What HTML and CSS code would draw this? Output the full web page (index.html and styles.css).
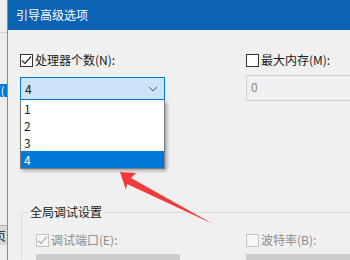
FILE: index.html
```html
<!DOCTYPE html>
<html lang="zh-CN">
<head>
  <meta charset="UTF-8">
  <title>引导高级选项</title>
  <link rel="stylesheet" href="styles.css">
</head>
<body>
  <div class="screen">
    <!-- window behind the dialog -->
    <div class="behind">
      <div class="behind-line"></div>
      <div class="behind-sel">((</div>
      <div class="behind-btn">页</div>
    </div>

    <div class="dialog">
      <div class="titlebar">引导高级选项</div>

      <div class="content">
        <div class="row top-row">
          <div class="col">
            <label class="check-label">
              <span class="checkbox checked">
                <svg width="11" height="11" viewBox="0 0 11 11"><path d="M1 5.5 L4 8.5 L10 1.5" fill="none" stroke="#333" stroke-width="1.2"/></svg>
              </span>处理器个数(N):
            </label>
            <div class="combo-wrap">
              <div class="combo">
                <span>4</span>
                <svg width="10" height="6" viewBox="0 0 10 6"><path d="M1 1 L5 5 L9 1" fill="none" stroke="#555" stroke-width="1"/></svg>
              </div>
              <ul class="dropdown">
                <li>1</li>
                <li>2</li>
                <li>3</li>
                <li class="selected">4</li>
              </ul>
            </div>
          </div>
          <div class="col">
            <label class="check-label">
              <span class="checkbox"></span>最大内存(M):
            </label>
            <div class="input disabled">0</div>
          </div>
        </div>

        <div class="group">
          <div class="group-title">全局调试设置</div>
          <div class="row group-row">
            <div class="col">
              <label class="check-label muted">
                <span class="checkbox checked dim">
                  <svg width="11" height="11" viewBox="0 0 11 11"><path d="M1 5.5 L4 8.5 L10 1.5" fill="none" stroke="#b5b5b5" stroke-width="1.2"/></svg>
                </span>调试端口(E):
              </label>
              <div class="gray-box"></div>
            </div>
            <div class="col">
              <label class="check-label muted">
                <span class="checkbox dim"></span>波特率(B):
              </label>
              <div class="gray-box"></div>
            </div>
          </div>
        </div>
      </div>

      <svg class="arrow" width="350" height="260" viewBox="0 0 350 260">
        <polygon points="120,172 136,173 131,178 213,224 127,184 126,190" fill="#f23a3a"/>
      </svg>
    </div>
  </div>
</body>
</html>
```

FILE: styles.css
```css
* { box-sizing: border-box; }
html, body { margin: 0; padding: 0; }
body {
  width: 350px;
  height: 260px;
  overflow: hidden;
  font-family: "Noto Sans CJK SC", "Liberation Sans", sans-serif;
  font-size: 12px;
  line-height: 16px;
  color: #1a1a1a;
  background: #f0f0f0;
}
.screen { display: flex; height: 260px; overflow: hidden; }

.behind {
  width: 7px;
  background: #ececec;
  display: flex;
  flex-direction: column;
  overflow: hidden;
}
.behind-line { height: 33px; border-bottom: 1px solid #d4d4d4; margin-bottom: 51px; }
.behind-sel {
  height: 13px;
  background: #0078d7;
  color: #fff;
  font-size: 11px;
  line-height: 13px;
  text-indent: -3px;
}
.behind-btn {
  margin-top: 128px;
  height: 20px;
  background: #d9d9d9;
  border-top: 1px solid #adadad;
  line-height: 20px;
  text-indent: -6px;
}

.dialog {
  flex: 1;
  position: relative;
  border-left: 1px solid #8a8a8a;
  background: #f0f0f0;
}
.titlebar {
  height: 30px;
  line-height: 30px;
  background: #0a63b3;
  color: #fff;
  padding-left: 8px;
}
.content { padding: 22px 0 0 12px; }

.row { display: grid; }
.top-row { grid-template-columns: 145px 1fr; column-gap: 81px; }
.col { display: flex; flex-direction: column; }

.check-label {
  display: flex;
  align-items: center;
  height: 16px;
  white-space: nowrap;
}
.checkbox {
  width: 13px;
  height: 13px;
  border: 1px solid #333;
  background: #fff;
  margin-right: 2px;
  display: flex;
  align-items: center;
  justify-content: center;
}
.checkbox.dim { border-color: #c4c4c4; background: #f7f7f7; }
.muted { color: #8d8d8d; }

.combo-wrap { position: relative; margin-top: 9px; }
.combo {
  height: 23px;
  background: #cce4f7;
  border: 1px solid #0078d7;
  display: flex;
  align-items: center;
  justify-content: space-between;
  padding: 0 6px 0 4px;
}
.dropdown {
  position: absolute;
  left: 0;
  top: 23px;
  width: 145px;
  margin: 0;
  padding: 0;
  list-style: none;
  background: #fff;
  border: 1px solid #7a7a7a;
  border-top: none;
  box-shadow: 2px 2px 3px rgba(0, 0, 0, 0.3);
  z-index: 2;
}
.dropdown li { height: 17px; line-height: 17px; padding-left: 3px; }
.dropdown li.selected { background: #0078d7; color: #fff; }

.input {
  margin-top: 7px;
  height: 26px;
  border: 1px solid #cfcfcf;
  border-right: none;
  padding-left: 4px;
  line-height: 22px;
}
.input.disabled { background: #f0f0f0; color: #8d8d8d; }

.group {
  margin: 111px 0 0 1px;
  border-top: 1px solid #dcdcdc;
  border-left: 1px solid #dcdcdc;
  padding-left: 14px;
  height: 47px;
}
.group-title {
  width: max-content;
  margin: -9px 0 0 -8px;
  padding: 0 2px;
  background: #f0f0f0;
}
.group-row { grid-template-columns: 144px 1fr; column-gap: 66px; margin-top: 12px; }
.gray-box { margin-top: 6px; height: 22px; background: #cccccc; }

.arrow {
  position: absolute;
  left: -8px;
  top: 0;
  pointer-events: none;
  z-index: 3;
}
```
